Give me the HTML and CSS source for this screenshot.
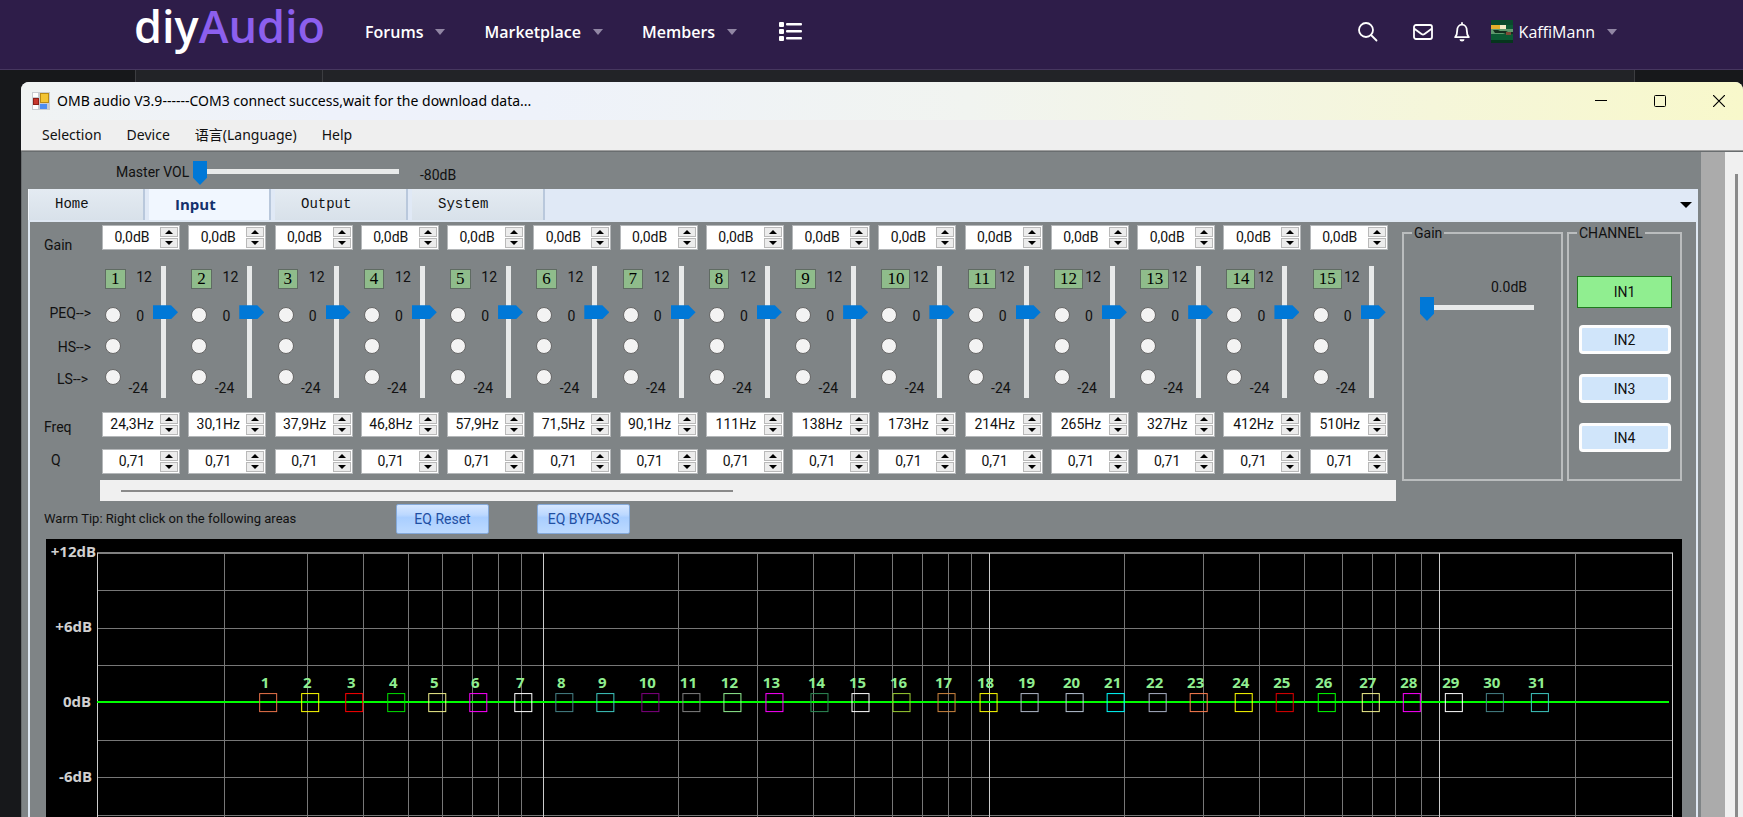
FILE: index.html
```html
<!DOCTYPE html>
<html lang="en">
<head>
  <meta charset="UTF-8">
  <title>diyAudio</title>
  <link rel="stylesheet" href="styles.css">
</head>
<body>
<header class="site-header">
  <a class="logo" href="#">diy<span>Audio</span></a>
  <nav class="site-nav">
    <a class="caret" href="#">Forums</a>
    <a class="caret" href="#">Marketplace</a>
    <a class="caret" href="#">Members</a>
    <a class="list-link" href="#" aria-label="List">
      <svg width="23" height="20" viewBox="0 0 23 20" fill="#fff">
        <rect x="0" y="0" width="5" height="5" rx="1"/><rect x="0" y="7" width="5" height="5" rx="1"/><rect x="0" y="14" width="5" height="5" rx="1"/>
        <rect x="7" y="1" width="16" height="2.500" rx="1"/><rect x="7" y="8" width="16" height="2.500" rx="1"/><rect x="7" y="15" width="16" height="2.500" rx="1"/>
      </svg>
    </a>
  </nav>
  <div class="user-nav">
    <a class="search-link" href="#" aria-label="Search">
      <svg width="20" height="20" viewBox="0 0 20 20" fill="none" stroke="#fff" stroke-width="1.800" stroke-linecap="round"><circle cx="8" cy="8" r="7"/><path d="M13 13l5.500 5.500"/></svg>
    </a>
    <a href="#" aria-label="Inbox">
      <svg width="20" height="16" viewBox="0 0 20 16" fill="none" stroke="#fff" stroke-width="1.800" stroke-linejoin="round"><rect x="1" y="1" width="18" height="14" rx="2"/><path d="M1 4.500l7.500 5.500q1.500 1 3 0L19 4.500"/></svg>
    </a>
    <a href="#" aria-label="Alerts">
      <svg width="16" height="20" viewBox="0 0 16 20"><path d="M8 1v1.500M1.200 15.200c1.600-1.700 2-3 2-6.700C3.200 5 5.300 2.700 8 2.700s4.800 2.300 4.800 5.800c0 3.700.4 5 2 6.700z" fill="none" stroke="#fff" stroke-width="1.800" stroke-linejoin="round" stroke-linecap="round"/><path d="M5.500 17.200h5a2.500 2.300 0 0 1-5 0z" fill="#fff"/></svg>
    </a>
    <a class="account caret" href="#">
      <svg width="22" height="23" viewBox="0 0 22 23">
        <rect width="22" height="23" fill="#0c5a33"/>
        <rect width="22" height="5" fill="#0a4a2c"/>
        <rect y="5" width="15" height="4" fill="#e8b02c"/>
        <rect x="9" y="5" width="6" height="5" fill="#f4ecc8"/>
        <rect y="9" width="22" height="5" fill="#5f9a6d"/>
        <path d="M2 10h5l2 1h6l2 1h5v2h-7l-3-1H4z" fill="#13301f"/>
        <rect x="15" y="12" width="5" height="3" fill="#7d4a35"/>
        <rect y="20" width="22" height="3" fill="#06351d"/>
      </svg>
      KaffiMann
    </a>
  </div>
</header>
<div class="page-strip"><div class="page-tab"></div></div>

<div class="app-window">
  <div class="title-bar">
    <svg width="18" height="18" viewBox="0 0 18 18">
      <rect width="18" height="18" fill="#c9ccd1"/>
      <rect x="1" y="1" width="5" height="4" fill="#fff"/><rect x="1" y="13" width="5" height="4" fill="#fff"/>
      <rect x="8.500" y="1.500" width="8" height="9" fill="#f3c433" stroke="#b98a14"/>
      <rect x="1.500" y="6.500" width="5" height="6" fill="#c8372d" stroke="#8d1f18"/>
      <rect x="8" y="12" width="7" height="5" fill="#4f8df0"/>
    </svg>
    <span class="title-text">OMB audio V3.9------COM3 connect success,wait for the download data...</span>
    <button class="win-btn" aria-label="Minimize"><svg width="12" height="12" viewBox="0 0 12 12"><path d="M0 5.500h12" stroke="#000"/></svg></button>
    <button class="win-btn" aria-label="Maximize"><svg width="12" height="12" viewBox="0 0 12 12"><rect x=".5" y=".5" width="11" height="11" rx="1" fill="none" stroke="#000"/></svg></button>
    <button class="win-btn" aria-label="Close"><svg width="12" height="12" viewBox="0 0 12 12"><path d="M0 0l12 12M12 0L0 12" stroke="#000" stroke-width="1.200"/></svg></button>
  </div>
  <div class="menu-bar">
    <button>Selection</button>
    <button>Device</button>
    <button>语言(Language)</button>
    <button>Help</button>
  </div>

  <div class="client">
    <main class="main">
      <div class="master">
        <label for="master-vol">Master VOL</label>
        <input class="h-range" id="master-vol" type="range" min="-80" max="0" value="-80">
        <output for="master-vol">-80dB</output>
      </div>
      <div class="tabs">
        <button class="tab">Home</button>
        <button class="tab active">Input</button>
        <button class="tab wide">Output</button>
        <button class="tab wide">System</button>
        <button class="tab-menu" aria-label="Tabs"></button>
      </div>

      <div class="panel">
        <div class="eq">
          <div class="row-labels">
            <span>Gain</span>
            <span class="type">PEQ--&gt;</span>
            <span class="type">HS--&gt;</span>
            <span class="type ls">LS--&gt;</span>
            <span>Freq</span>
            <span class="q">Q</span>
          </div>
          <div class="bands-wrap">
            <div class="bands" id="bands"></div>
            <div class="h-scroll"><div class="h-scroll-thumb"></div></div>
          </div>
          <fieldset class="group gain-group">
            <legend>Gain</legend>
            <output for="in-gain">0.0dB</output>
            <input class="h-range" id="in-gain" type="range" min="0" max="12" value="0" aria-label="Input gain">
          </fieldset>
          <fieldset class="group channel-group">
            <legend>CHANNEL</legend>
            <button class="channel selected">IN1</button>
            <button class="channel">IN2</button>
            <button class="channel">IN3</button>
            <button class="channel">IN4</button>
          </fieldset>
        </div>
        <div class="eq-actions">
          <span class="tip">Warm Tip: Right click on the following areas</span>
          <button class="eq-btn">EQ Reset</button>
          <button class="eq-btn">EQ BYPASS</button>
        </div>
        <svg class="chart" id="chart" viewBox="0 0 1635 300"></svg>
      </div>
    </main>
    <div class="gutter"></div>
    <div class="v-scroll"><div class="v-scroll-thumb"></div></div>
  </div>
</div>
<script src="script.js"></script>
</body>
</html>
```
FILE: styles.css
```css
* {
  box-sizing: border-box;
}
body {
  margin: 0;
  height: 100vh;
  overflow: hidden;
  display: flex;
  flex-direction: column;
  background: #17181b;
  font-family: Roboto, "Liberation Sans", "Noto Sans CJK SC", sans-serif;
  font-size: 14px;
  line-height: 16px;
  color: #111;
}
button {
  font: inherit;
  color: inherit;
  padding: 0;
  border: none;
  background: none;
}
input {
  margin: 0;
}

/* forum header */
.site-header {
  flex: none;
  display: flex;
  align-items: center;
  height: 70px;
  padding: 0 126px 6px 134px;
  background: #2e1d49;
  border-bottom: 1px solid #46375f;
  font-family: "Open Sans", "Noto Sans", sans-serif;
}
.site-header a {
  color: #fff;
  text-decoration: none;
}
.site-header svg {
  display: block;
}
.logo {
  font-size: 45px;
  line-height: 52px;
  font-weight: 600;
  padding-bottom: 11px;
}
.site-header .logo span {
  color: #8c5fee;
}
.site-nav {
  display: flex;
  align-items: center;
  gap: 39px;
  margin-left: 40px;
  font-size: 16px;
  line-height: 24px;
  font-weight: 600;
}
.caret {
  display: flex;
  align-items: center;
}
.caret::after {
  content: "";
  margin-left: 12px;
  border: 5px solid transparent;
  border-top: 6px solid #9186a4;
  border-bottom: none;
}
.list-link {
  margin-left: 3px;
}
.user-nav {
  display: flex;
  align-items: center;
  gap: 21px;
  margin-left: auto;
  font-size: 16px;
  line-height: 24px;
}
.search-link {
  margin-right: 14px;
}
.account svg {
  margin-right: 6px;
}
.page-strip {
  flex: none;
  height: 12px;
  margin: 0 108px 0 135px;
  background: #222327;
  border: solid #3c3d41;
  border-width: 0 1px;
}
.page-tab {
  width: 187px;
  height: 100%;
  border-right: 1px solid #3c3d41;
}

/* application window */
.app-window {
  flex: 1;
  min-height: 0;
  display: flex;
  flex-direction: column;
  margin-left: 21px;
  border-radius: 8px 8px 0 0;
  overflow: hidden;
  background: #efefef;
}
.title-bar {
  flex: none;
  display: flex;
  align-items: center;
  height: 38px;
  padding: 0 18px 0 11px;
  background: linear-gradient(90deg, #f0f3f3 0%, #eef2fb 18%, #eef2fa 30%, #f1f4f0 55%, #f5f6da 82%, #f8f8cb 100%);
  font-family: "Noto Sans", "Open Sans", sans-serif;
  font-size: 14px;
  color: #000;
}
.title-text {
  flex: 1;
  margin-left: 7px;
}
.win-btn {
  width: 12px;
  height: 12px;
  margin-left: 47px;
}
.win-btn svg {
  display: block;
}
.menu-bar {
  flex: none;
  display: flex;
  gap: 25px;
  height: 31px;
  padding-left: 21px;
  border-bottom: 1px solid #a0a0a0;
  font-family: "Noto Sans", "Noto Sans CJK SC", sans-serif;
  font-size: 14px;
}
.client {
  flex: 1;
  min-height: 0;
  display: flex;
}
.main {
  flex: 1;
  min-width: 0;
  padding: 0 3px 0 6px;
  background: #7f8486;
  border: solid #696d6f;
  border-width: 1px 0 0 1px;
}
.gutter {
  width: 24px;
  background: #ababab;
  border-top: 1px solid #696d6f;
}
.v-scroll {
  width: 18px;
  padding: 22px 0 0 10px;
  background: #f0f0f0;
  border-top: 1px solid #696d6f;
}
.v-scroll-thumb {
  width: 3px;
  height: 100%;
  background: #8a8a8a;
}

/* sliders */
.h-range {
  -webkit-appearance: none;
  appearance: none;
  display: block;
  height: 24px;
  background: linear-gradient(#e8eaea, #e8eaea) 0 8px / 100% 5px no-repeat;
}
.h-range::-webkit-slider-thumb {
  -webkit-appearance: none;
  width: 14px;
  height: 24px;
  background: #0078d7;
  clip-path: polygon(0 0, 100% 0, 100% 70%, 50% 100%, 0 70%);
}
.v-range {
  -webkit-appearance: none;
  appearance: none;
  writing-mode: vertical-lr;
  direction: rtl;
  width: 25px;
  height: 132px;
  background: linear-gradient(#e8eaea, #e8eaea) 8px 0 / 5px 100% no-repeat;
}
.v-range::-webkit-slider-thumb {
  -webkit-appearance: none;
  width: 25px;
  height: 14px;
  background: #0078d7;
  clip-path: polygon(0 0, 72% 0, 100% 50%, 72% 100%, 0 100%);
}

.master {
  display: flex;
  align-items: center;
  height: 37px;
  padding: 5px 0 0 88px;
}
.master label {
  width: 77px;
  padding-bottom: 3px;
}
.master .h-range {
  width: 206px;
}
.master output {
  margin: 3px 0 0 21px;
}

/* tabs */
.tabs {
  display: flex;
  gap: 4px;
  height: 31px;
  background: #e0e9f6;
  border-left: 1px solid #f4f8fd;
}
.tab {
  width: 116px;
  padding: 0 26px 2px;
  text-align: left;
  font-family: "Liberation Mono", monospace;
  font-size: 14px;
  background: linear-gradient(#e4ebf2, #d8e1ea);
  border-right: 2px solid #b9c8dc;
}
.tab.active {
  width: 122px;
  font-family: "Open Sans", sans-serif;
  font-size: 15px;
  font-weight: 700;
  color: #14306c;
  background: #f1f7ff;
}
.tab.wide {
  width: 133px;
}
.tab-menu {
  align-self: center;
  margin: 0 6px 0 auto;
  border: 6px solid transparent;
  border-top-color: #000;
  border-bottom: none;
}
.panel {
  border: solid #dfe8f3;
  border-width: 2px 2px 0;
  padding-top: 3px;
}

/* equaliser strips */
.eq {
  display: flex;
}
.row-labels {
  width: 70px;
  display: grid;
  grid-template-rows: 68px 34px 32px 48px 33px 16px;
  align-content: start;
  padding: 12px 9px 0 14px;
  white-space: nowrap;
}
.row-labels .type {
  text-align: right;
}
.row-labels .ls {
  padding-right: 3px;
}
.row-labels .q {
  padding-left: 7px;
}
.bands-wrap {
  flex: 1;
}
.bands {
  display: grid;
  grid-template-columns: repeat(15, 1fr);
  padding-left: 2px;
}
.spin {
  display: flex;
  width: 78px;
  height: 25px;
  padding: 1px;
  background: #fff;
  border: 1px solid #b4b7b9;
}
.spin input {
  flex: 1;
  min-width: 0;
  height: 19px;
  padding: 0;
  border: none;
  background: none;
  font: inherit;
  text-align: center;
  color: #111;
}
.spin-buttons {
  display: grid;
  gap: 1px;
  width: 18px;
}
.spin-buttons button {
  display: flex;
  align-items: center;
  justify-content: center;
  background: #ececec;
  border: 1px solid #b9b9b9;
}
.spin-buttons button::before {
  content: "";
  border: 4px solid transparent;
  border-top: none;
  border-bottom: 4px solid #000;
}
.spin-buttons .down::before {
  border-top: 4px solid #000;
  border-bottom: none;
}
.strip {
  display: flex;
  width: 76px;
  margin: 16px 0 14px;
}
.strip-left {
  width: 51px;
  padding: 3px 0 0 3px;
}
.strip-head {
  display: flex;
  justify-content: space-between;
  height: 20px;
  padding-right: 1px;
  margin-bottom: 11px;
}
.badge {
  min-width: 20px;
  padding: 1px 5px 0;
  text-align: center;
  font-family: "Liberation Serif", serif;
  font-size: 17px;
  background: #8fbc8b;
  border: 1px solid #5f6b62;
  color: #000;
}
.types {
  display: grid;
  grid-template-columns: 20px 1fr;
  grid-template-rows: 31px 31px 34px;
}
.types input {
  grid-column: 1;
  -webkit-appearance: none;
  appearance: none;
  width: 16px;
  height: 16px;
  margin-top: 7px;
  border-radius: 50%;
  background: #f3f3f3;
  border: 1px solid #666;
}
.scale-zero,
.scale-low {
  grid-column: 2;
  text-align: right;
}
.scale-zero {
  grid-row: 1;
  padding: 8px 9px 0 0;
}
.scale-low {
  grid-row: 3;
  align-self: end;
  padding-right: 5px;
}
.bands .spin + .spin {
  margin-top: 12px;
}
.h-scroll {
  height: 21px;
  margin-top: 6px;
  padding: 10px 0 0 21px;
  background: #f0f0f0;
}
.h-scroll-thumb {
  width: 48%;
  height: 2px;
  background: #8a8a8a;
}

/* side groups */
.group {
  min-width: 0;
  height: 256px;
  margin: 0 0 0 4px;
  padding: 0 8px;
  border: 2px solid #babdbe;
}
.group legend {
  padding: 0 2px;
}
.gain-group {
  width: 161px;
  margin-left: 6px;
}
.gain-group output {
  display: block;
  margin: 38px 26px 2px 0;
  text-align: right;
}
.gain-group .h-range {
  width: 114px;
  margin-left: 8px;
}
.channel-group {
  width: 115px;
  margin-right: 14px;
}
.channel {
  display: block;
  width: 92px;
  height: 29px;
  margin: 0 auto 20px;
  background: #d0e5fa;
  border: 3px solid #fdfdfd;
  border-radius: 4px;
}
.channel.selected {
  width: 95px;
  height: 32px;
  margin: 35px auto 17px;
  background: #90ee90;
  border: 1px solid #1f7a1f;
  border-radius: 0;
}

.eq-actions {
  display: flex;
  align-items: center;
  height: 38px;
  padding: 3px 0 5px 14px;
}
.tip {
  width: 352px;
  font-size: 13px;
}
.eq-btn {
  width: 93px;
  height: 30px;
  margin-right: 48px;
  background: linear-gradient(#d6e7ff 0%, #bcd8ff 35%, #a9ceff 45%, #bddaff 100%);
  border: 1px solid #84a9d9;
  border-radius: 2px;
  color: #1f4fa3;
}

/* response chart */
.chart {
  display: block;
  width: calc(100% - 30px);
  margin-left: 16px;
  background: #000;
}
.chart .grid-line {
  stroke: #777;
}
.chart .top-line {
  stroke: #808080;
  stroke-width: 2;
}
.chart .decade {
  stroke: #ccc;
}
.chart .response {
  stroke: #00ff00;
  stroke-width: 2;
}
.chart rect {
  fill: none;
  stroke-width: 1;
}
.chart text {
  font-family: "Open Sans", sans-serif;
  font-size: 15px;
  font-weight: 700;
}
.chart .db {
  fill: #d0d0d0;
  text-anchor: end;
}
.chart .num {
  fill: #90ee90;
  text-anchor: middle;
}
```
FILE: script.js
```js
const freqs = ['24,3Hz', '30,1Hz', '37,9Hz', '46,8Hz', '57,9Hz', '71,5Hz', '90,1Hz', '111Hz',
  '138Hz', '173Hz', '214Hz', '265Hz', '327Hz', '412Hz', '510Hz'];

function spin(label, value) {
  return `<div class="spin">
    <input type="text" value="${value}" aria-label="${label}">
    <div class="spin-buttons">
      <button class="up" aria-label="${label} up"></button>
      <button class="down" aria-label="${label} down"></button>
    </div>
  </div>`;
}

document.getElementById('bands').innerHTML = freqs.map((freq, i) => {
  const n = i + 1;
  return `<div class="band">
    ${spin('Gain ' + n, '0,0dB')}
    <div class="strip">
      <div class="strip-left">
        <div class="strip-head"><span class="badge">${n}</span><span>12</span></div>
        <div class="types">
          <input type="radio" name="type${n}" aria-label="PEQ ${n}">
          <input type="radio" name="type${n}" aria-label="HS ${n}">
          <input type="radio" name="type${n}" aria-label="LS ${n}">
          <span class="scale-zero">0</span>
          <span class="scale-low">-24</span>
        </div>
      </div>
      <input class="v-range" type="range" min="-24" max="12" value="0" aria-label="Level ${n}">
    </div>
    ${spin('Freq ' + n, freq)}
    ${spin('Q ' + n, '0,71')}
  </div>`;
}).join('');

// chart: grid, response line, one handle per band
const left = 51, right = 1626, top0 = 14, zero = 163;
const minor = [178, 261, 317, 362, 396, 426, 452, 475, 632, 711, 767, 808, 846, 876, 902, 925,
  1078, 1157, 1213, 1258, 1296, 1326, 1349, 1375, 1529];
const decades = [497, 943, 1393];
const rows = [51, 89, 126, 201, 238, 276];
const nodes = [
  [213, '#e9734a'], [255, '#ffff00'], [299, '#ff0000'], [341, '#00e000'], [382, '#f0f08c'],
  [423, '#ff00ff'], [468, '#ffffff'], [509, '#468288'], [550, '#3ec8c0'], [595, '#800080'],
  [636, '#808080'], [677, '#90ee90'], [719, '#ff00ff'], [764, '#2e8b57'], [805, '#ffffff'],
  [846, '#9acd32'], [891, '#cd853f'], [933, '#ffff00'], [974, '#b0b8c8'], [1019, '#b8c4d4'],
  [1060, '#00ffff'], [1102, '#a8b0c4'], [1143, '#ff7f50'], [1188, '#ffff00'], [1229, '#e00000'],
  [1271, '#00ff00'], [1315, '#f0f08c'], [1356, '#ff00ff'], [1398, '#ffffff'], [1439, '#468288'],
  [1484, '#3ec8c0']
];

const line = (x1, y1, x2, y2, cls) =>
  `<line class="${cls}" x1="${x1}" y1="${y1}" x2="${x2}" y2="${y2}" shape-rendering="crispEdges"/>`;

let svg = '';
rows.forEach(y => svg += line(left, y, right, y, 'grid-line'));
minor.forEach(x => svg += line(x, top0, x, 300, 'grid-line'));
svg += line(left, top0, right, top0, 'top-line');
svg += line(right, top0, right, 300, 'decade');
svg += line(left, top0, left, 300, 'decade');
decades.forEach(x => svg += line(x, top0, x, 300, 'decade'));
svg += line(left, zero, right - 4, zero, 'response');
[['+12dB', 50, 18], ['+6dB', 46, 93], ['0dB', 45, 168], ['-6dB', 46, 243]].forEach(([t, x, y]) => {
  svg += `<text class="db" x="${x}" y="${y}">${t}</text>`;
});
nodes.forEach(([x, color], i) => {
  svg += `<rect x="${x}.5" y="154.5" width="17" height="18" stroke="${color}"/>`;
  svg += `<text class="num" x="${x + 6}" y="149">${i + 1}</text>`;
});
document.getElementById('chart').innerHTML = svg;
```
